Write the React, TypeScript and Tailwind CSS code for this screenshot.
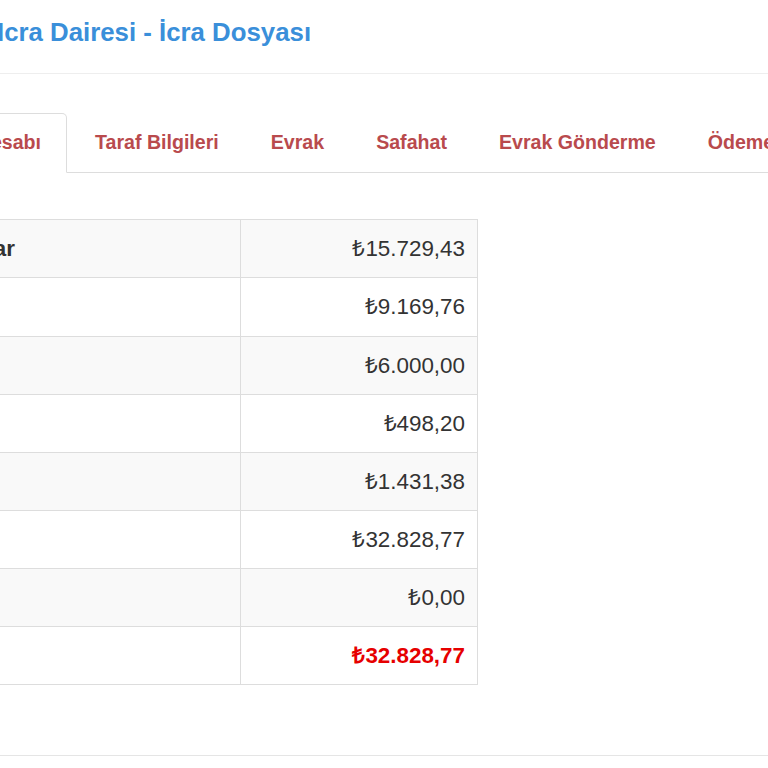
import React from 'react';

type Row = { label: string; value: string; bold?: boolean; total?: boolean };

const rows: Row[] = [
  { label: 'Toplam Alacaklar', value: '₺15.729,43', bold: true },
  { label: 'Asıl Alacak', value: '₺9.169,76' },
  { label: 'Faiz', value: '₺6.000,00' },
  { label: 'Masraflar', value: '₺498,20' },
  { label: 'Vekalet Ücreti', value: '₺1.431,38' },
  { label: 'Toplam Borç', value: '₺32.828,77' },
  { label: 'Tahsilat', value: '₺0,00' },
  { label: 'Kalan Borç', value: '₺32.828,77', total: true },
];

const tabs = ['Taraf Bilgileri', 'Evrak', 'Safahat', 'Evrak Gönderme', 'Ödeme'];

const App: React.FC = () => {
  return (
    <div className="w-[768px] h-[768px] overflow-hidden bg-white font-['Liberation_Sans',Arial,sans-serif] text-[#333]">
      {/* page header */}
      <div className="h-[74px] border-b border-[#eee]">
        <h4 className="ml-[-3px] pt-[18px] text-[25.8px] leading-[1.1] font-bold text-[#3a8fda] whitespace-nowrap">
          Icra Dairesi - İcra Dosyası
        </h4>
      </div>

      {/* tabs */}
      <ul className="mt-[39px] flex border-b border-[#ddd] whitespace-nowrap">
        <li className="ml-[-150px] w-[217px] h-[60px] -mb-px flex items-center justify-end pr-[25px] bg-white border border-[#ddd] border-b-transparent rounded-t-[5px] text-[19.6px] font-bold text-[#b94a4d] shrink-0">
          Dosya Hesabı
        </li>
        {tabs.map((t, i) => (
          <li
            key={t}
            className={`${i === 0 ? 'ml-[2px]' : ''} h-[60px] -mb-px flex items-center px-[25px] border border-transparent text-[19.6px] font-bold text-[#b94a4d] shrink-0`}
          >
            {t}
          </li>
        ))}
      </ul>

      {/* account table */}
      <div className="mt-[46px] ml-[-180px] w-[658px] border-t border-l border-[#ddd]">
        {rows.map((r, i) => (
          <div
            key={i}
            className={`flex ${i === 1 ? 'h-[59px]' : 'h-[58px]'} border-b border-[#ddd] ${
              i % 2 === 0 ? 'bg-[#f9f9f9]' : 'bg-white'
            }`}
          >
            <div
              className={`w-[420px] border-r border-[#ddd] flex items-center pl-[11px] text-[22.4px] whitespace-nowrap ${
                r.bold || r.total ? 'font-bold' : ''
              }`}
            >
              {r.label}
            </div>
            <div
              className={`w-[237px] border-r border-[#ddd] flex items-center justify-end pr-[12px] text-[22.4px] ${
                r.total ? 'font-bold text-[#e60000]' : 'text-[#333]'
              }`}
            >
              {r.value}
            </div>
          </div>
        ))}
      </div>

      <div className="mt-[70px] border-t border-[#e5e5e5]" />
    </div>
  );
};

export default App;
